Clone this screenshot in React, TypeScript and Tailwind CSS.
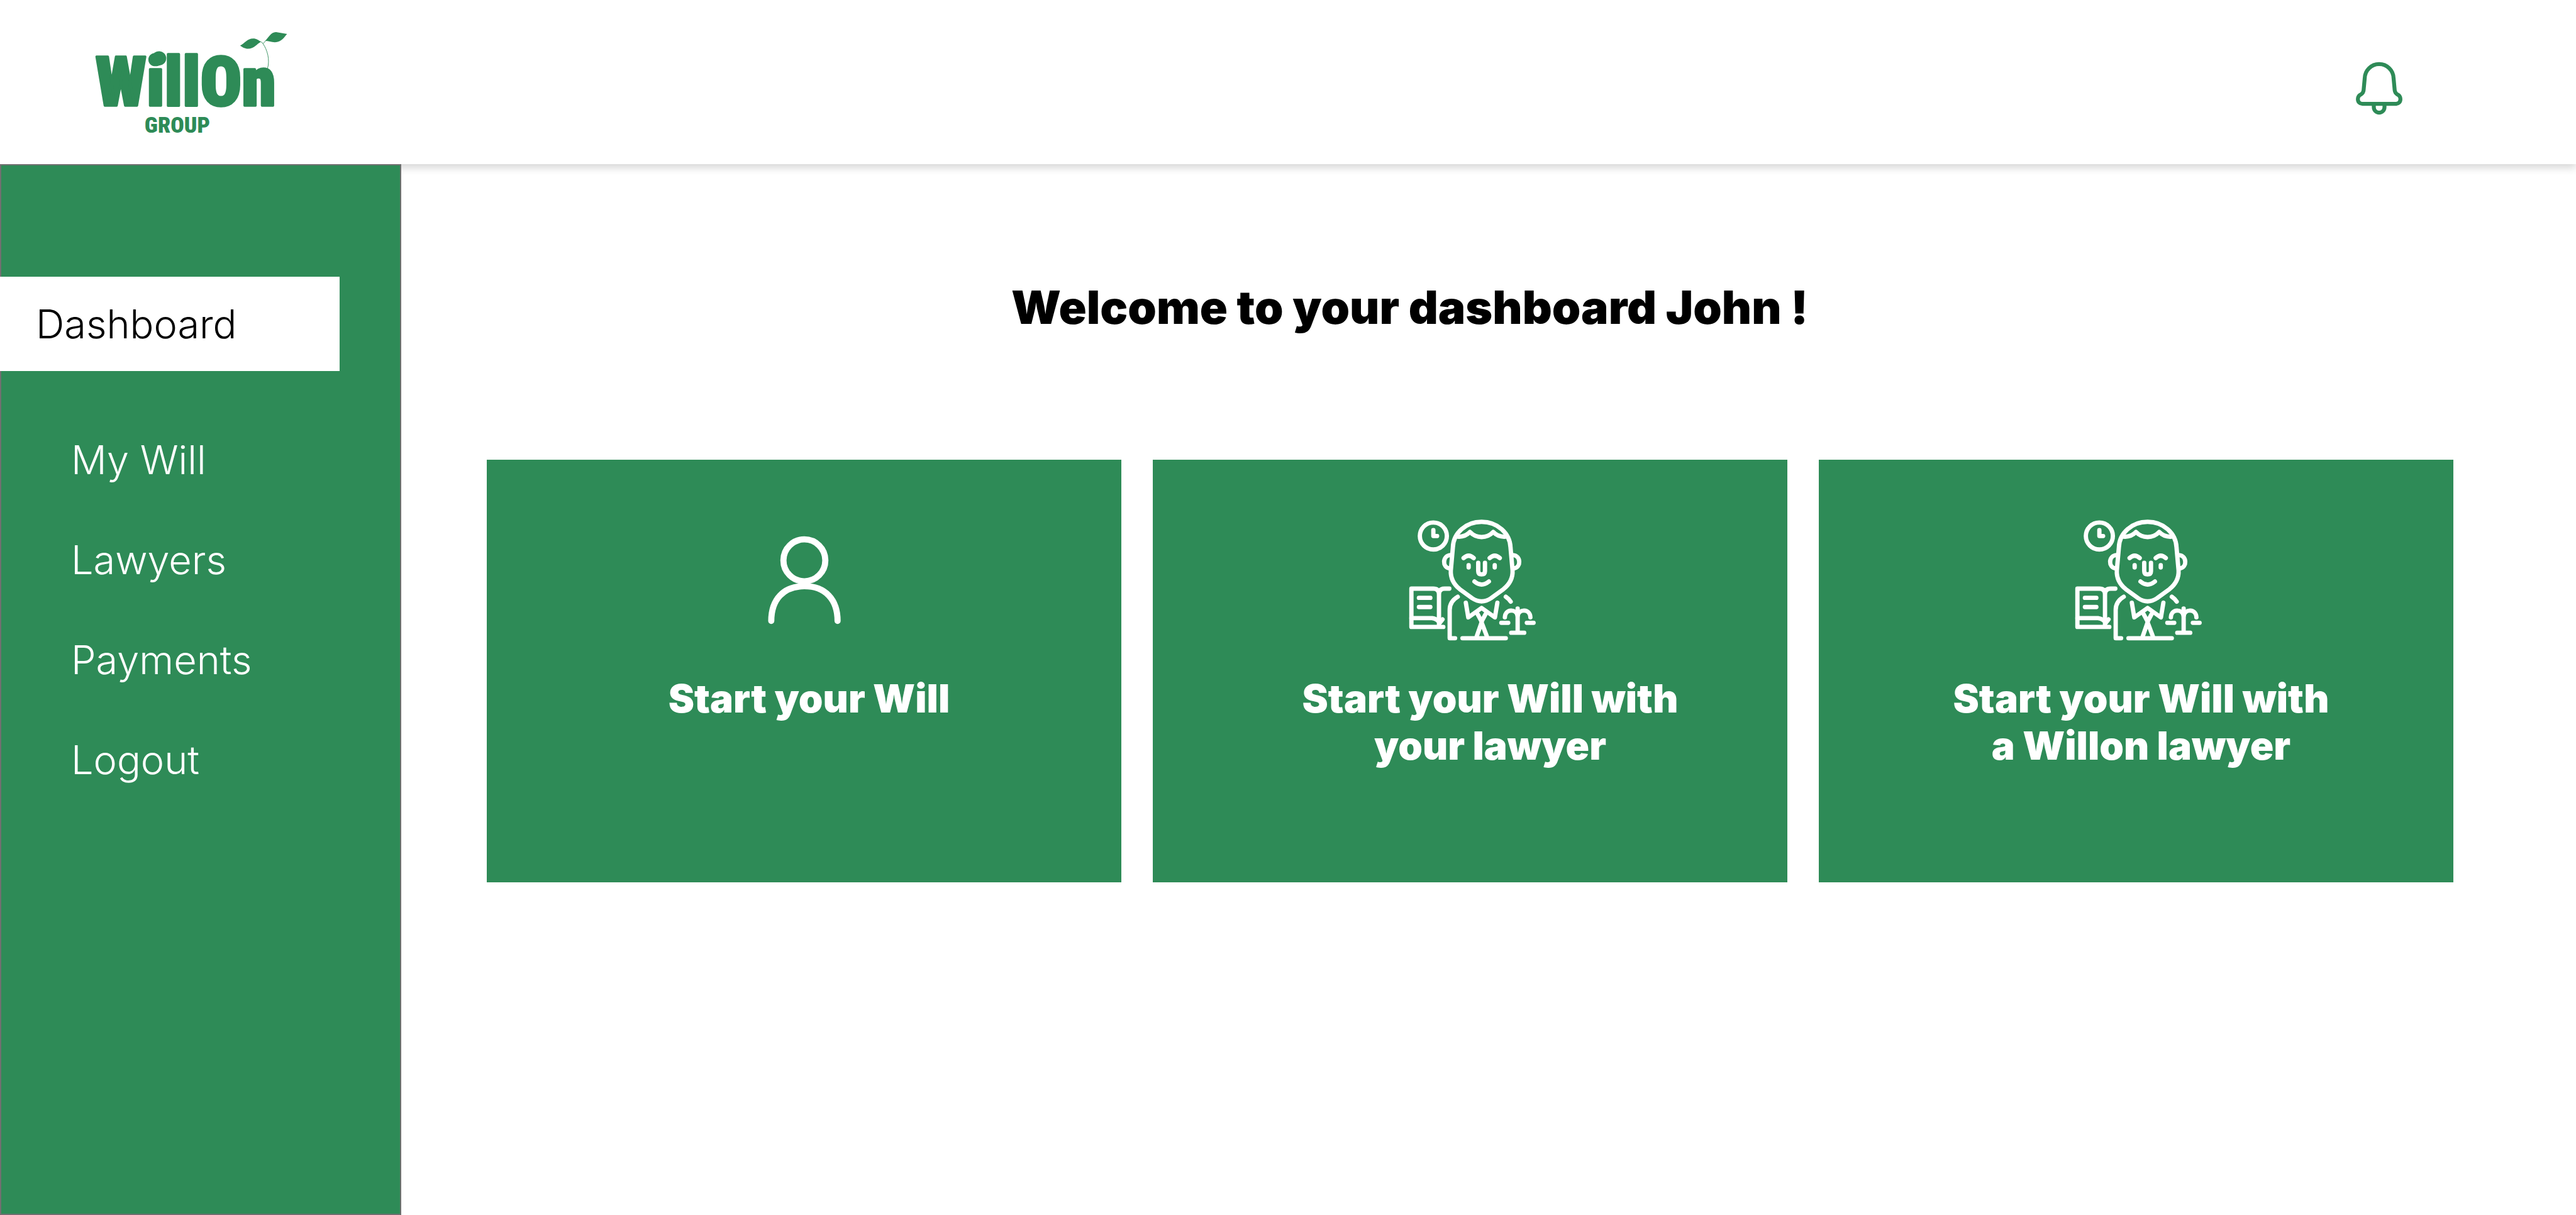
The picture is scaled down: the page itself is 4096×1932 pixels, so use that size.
const navItems = ["My Will", "Lawyers", "Payments", "Logout"];

function Logo() {
  return (
    <svg viewBox="0 0 1200 690" className="h-[206px] w-[358px]" fill="#2e8b57" role="img" aria-label="WillOn Group">
      <text x="90" y="470" fontSize="366" fontWeight="900" stroke="#2e8b57" strokeWidth="12" strokeLinejoin="round" fontFamily="'Roboto Condensed', Roboto, sans-serif">
        WillOn
      </text>
      <circle cx="429" cy="217" r="38" />
      <text x="526" y="614" fontSize="120" fontWeight="900" textAnchor="middle" fontFamily="'Roboto Condensed', Roboto, sans-serif">
        GROUP
      </text>
      <path d="M861 149C885 136 900 111 930 111C948 111 960 120 972 129C950 140 935 166 903 166C886 166 872 157 861 149Z" />
      <path d="M994 124C1010 110 1024 77 1052 77L1111 87C1095 104 1082 131 1046 131C1026 131 1012 124 994 124Z" />
      <path d="M970 128Q979 131 983 139L997 123M983 139C1004 170 1022 222 1006 274" fill="none" stroke="#2e8b57" strokeWidth="3" />
    </svg>
  );
}

function BellIcon() {
  return (
    <svg viewBox="140 84 260 292" className="h-[87px] w-[78px]" fill="none" stroke="#2e8b57" strokeWidth="21" strokeLinejoin="round" aria-hidden="true">
      <path d="M270 100.500C228 100.500 194 134 193 176L187 240C186 250 181 257 173 262C162 267 156.500 276 156.500 287C156.500 303 167 312.500 181 312.500H359C373 312.500 383.500 303 383.500 287C383.500 276 378 267 367 262C359 257 354 250 353 240L347 176C346 134 312 100.500 270 100.500Z" />
      <path d="M241.500 313V331A28.500 28.500 0 0 0 298.500 331V313" />
    </svg>
  );
}

function PersonIcon() {
  return (
    <svg viewBox="78 70 390 472" className="h-[141px] w-[116px]" fill="none" stroke="#fff" strokeWidth="33" strokeLinecap="round" aria-hidden="true">
      <circle cx="273" cy="200" r="112" />
      <path d="M96 524C96 410 160 338.500 273 338.500C386 338.500 450.500 410 450.500 524" />
    </svg>
  );
}

function LawyerIcon() {
  return (
    <svg viewBox="74 70 680 650" className="h-[194px] w-[203px]" fill="none" stroke="#fff" strokeWidth="23" strokeLinecap="round" strokeLinejoin="round" aria-hidden="true">
      {/* clock */}
      <circle cx="205" cy="161.500" r="72" />
      <path d="M205 130V161.500H225" />
      {/* head, hair and ears */}
      <path d="M462 86C378 86 311 146 309 222L298 345C296 384 315 420 346 445L412 493Q462 526 512 493L578 445C609 420 629 384 627 345L616 222C613 146 546 86 462 86Z" />
      <path d="M334 165C360 167 383 158 400 140C434 176 490 176 524 140C541 158 564 167 590 165" />
      <path d="M296 263C252 266 252 330 291 334M628 263C673 266 673 330 634 334" />
      {/* face */}
      <path d="M366 279Q393 254 420 279M505 279Q532 254 559 279" />
      <path d="M393 317V329M532 317V329" />
      <path d="M444 304V349Q444 366 462 366Q480 366 480 349V304" />
      <path d="M424 404Q462 436 501 404" />
      {/* book */}
      <path d="M258 646H88V442H205Q235 442 235 472V605M235 472Q235 442 265 442H290" />
      <path d="M88 599H198Q228 603 238 626L254 606M235 605V632" />
      <path d="M128 491H189M128 540H189" />
      {/* suit */}
      <path d="M335 485Q292 510 292 555V706H321" />
      <path d="M360 706H591" />
      <path d="M378 517L391 595L462 545L533 595L546 517" />
      <path d="M441 578L462 617L483 578" />
      <path d="M462 622L436 696M462 622L490 696" />
      <path d="M591 485Q606 495 617 511" />
      {/* scales */}
      <path d="M654 548V677M620 677H689" />
      <path d="M586 595C588 548 648 548 654 588C660 548 720 548 722 595" />
      <path d="M567 624H604M703 624H739" />
    </svg>
  );
}

const cards = [
  { lines: ["Start your Will"], Icon: PersonIcon, iconPad: "", textPad: "pl-4" },
  { lines: ["Start your Will with", "your lawyer"], Icon: LawyerIcon, iconPad: "pl-2", textPad: "pl-16" },
  { lines: ["Start your Will with", "a Willon lawyer"], Icon: LawyerIcon, iconPad: "pl-2", textPad: "pl-4" },
];

export default function App() {
  return (
    <div className="flex min-h-screen flex-col bg-white font-['Inter',sans-serif] text-black">
      <header className="flex h-[261px] items-center justify-between bg-white pr-[274px] pl-[125px] shadow-[0_6px_12px_rgba(0,0,0,0.16)]">
        <a href="#home">
          <Logo />
        </a>
        <button type="button" aria-label="Notifications" className="mt-5">
          <BellIcon />
        </button>
      </header>

      <div className="flex grow">
        <aside className="w-[638px] shrink-0 border-2 border-[#707070] bg-[#2e8b57] pt-[177px] text-[63px] font-light text-white">
          <nav className="-ml-[2px] flex flex-col">
            <a href="#dashboard" aria-current="page" className="flex h-[150px] w-[540px] items-center bg-white pl-[57px] text-black">
              Dashboard
            </a>
            <div className="mt-[62px] flex flex-col">
              {navItems.map((item) => (
                <a key={item} href="#" className="flex h-[159px] items-center pl-[113px]">
                  {item}
                </a>
              ))}
            </div>
          </nav>
        </aside>

        <main className="grow pt-[183px] pr-[195px] pl-[136px]">
          <h1 className="pr-[192px] text-center text-[73px] leading-[90px] font-black">Welcome to your dashboard John !</h1>
          <div className="mt-[197px] grid grid-cols-3 gap-[50px]">
            {cards.map(({ lines, Icon, iconPad, textPad }) => (
              <a key={lines.join(" ")} href="#" className="flex min-h-[672px] flex-col bg-[#2e8b57] text-white">
                <span className={`flex h-[342px] items-center justify-center pt-10 ${iconPad}`}>
                  <Icon />
                </span>
                <span className={`flex flex-col text-center text-[62px] leading-[75px] font-black ${textPad}`}>
                  {lines.map((line) => (
                    <span key={line}>{line}</span>
                  ))}
                </span>
              </a>
            ))}
          </div>
        </main>
      </div>
    </div>
  );
}
